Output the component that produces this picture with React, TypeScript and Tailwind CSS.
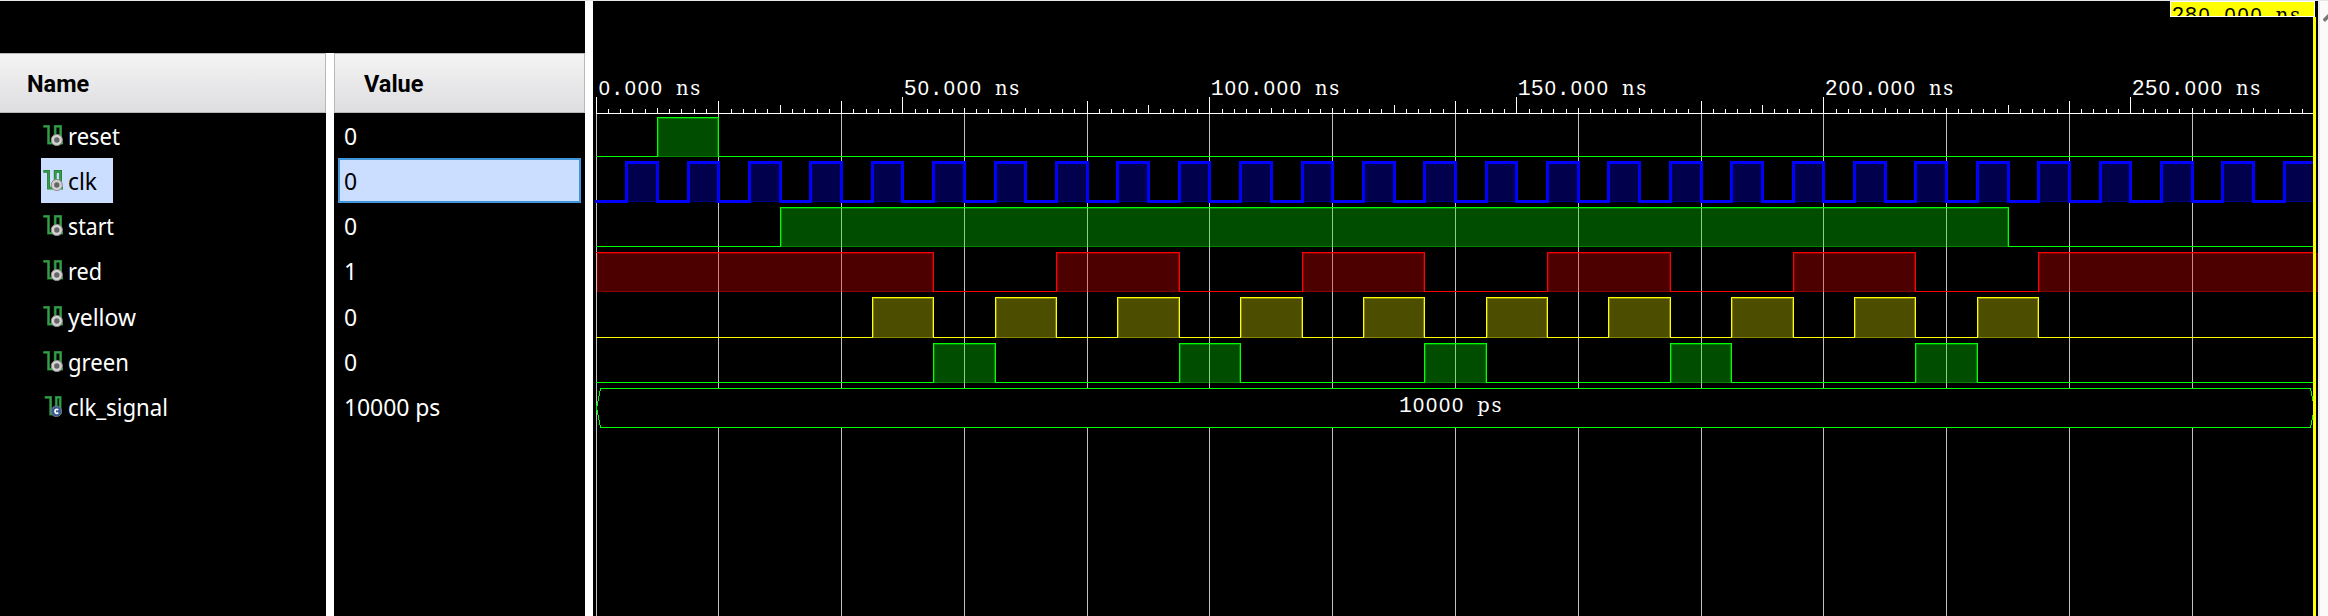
import React from "react";

const ORIGIN = 3;
const SCALE = 6.1393;
const END = 1722;
const px = (ns: number) => ORIGIN + Math.floor(ns * SCALE);

type Span = [number, number];

const signals = [
  { name: "reset", value: "0", h: "h-[45px]", w: "w-[52px]" },
  { name: "clk", value: "0", h: "h-[45px]", w: "w-[29px]", selected: true },
  { name: "start", value: "0", h: "h-[45px]", w: "w-[46px]" },
  { name: "red", value: "1", h: "h-[46px]", w: "w-[34px]" },
  { name: "yellow", value: "0", h: "h-[45px]", w: "w-[68px]" },
  { name: "green", value: "0", h: "h-[45px]", w: "w-[61px]" },
  { name: "clk_signal", value: "10000 ps", h: "h-[45px]", w: "w-[100px]", constant: true },
];

const clkSpans: Span[] = Array.from({ length: 28 }, (_, i) => [i * 10 + 5, i * 10 + 10]);
const yellowSpans: Span[] = Array.from({ length: 10 }, (_, i) => [i * 20 + 45, i * 20 + 55]);
const greenSpans: Span[] = Array.from({ length: 5 }, (_, i) => [i * 40 + 55, i * 40 + 65]);
const redSpans: Span[] = [[0, 55], [75, 95], [115, 135], [155, 175], [195, 215], [235, 281]];

function SignalIcon({ constant }: { constant?: boolean }) {
  const d = constant ? "M1.8 1.4H7.6V18.2H13.3V1.4H17.2V18.2" : "M0.4 1.4H5.5V18.2H12.2V1.4H17.6V18.2H20";
  return (
    <svg width="21" height="22" viewBox="0 0 21 22" className="shrink-0">
      <path d={d} fill="none" stroke="#237a35" strokeWidth="2.8" />
      <path d={d} fill="none" stroke="#32a047" strokeWidth="1.4" />
      {constant ? (
        <>
          <circle cx="13.3" cy="15.3" r="5.3" fill="#3a5a94" stroke="#6d7686" strokeWidth="1" />
          <path d="M15.3 13.9Q13.6 12.7 12.4 13.9Q11.5 15.3 12.4 16.7Q13.6 17.9 15.3 16.7" fill="none" stroke="#fff" strokeWidth="1.7" />
        </>
      ) : (
        <>
          <circle cx="13.8" cy="15" r="5.6" fill="#d2d2d2" stroke="#8c8c8c" strokeWidth="1" />
          <circle cx="13.8" cy="15" r="2.7" fill="#666" />
        </>
      )}
    </svg>
  );
}

function glyphStyle(ch: string) {
  if (ch === "0") return { family: "'Liberation Sans', sans-serif", size: 20 };
  if (/[a-z]/.test(ch)) return { family: "'DejaVu Serif', serif", size: 19.5 };
  return { family: "'Liberation Mono', monospace", size: 21.5 };
}

function Mono({ x, y, text, color = "#fff" }: { x: number; y: number; text: string; color?: string }) {
  return (
    <text y={y} fill={color} textAnchor="middle" xmlSpace="preserve">
      {text.split("").map((ch, i) => {
        const g = glyphStyle(ch);
        return (
          <tspan key={i} x={x + i * 13 + 6.5} fontFamily={g.family} fontSize={g.size}>
            {ch}
          </tspan>
        );
      })}
    </text>
  );
}

function Wave({ spans, high, low, color, width = 1 }: { spans: Span[]; high: number; low: number; color: string; width?: number }) {
  const startsHigh = spans[0][0] === 0;
  let d = `M${ORIGIN + 0.5 - (width > 1 ? 1.5 : 0.5)} ${(startsHigh ? high : low) + 0.5}`;
  for (const [a, b] of spans) {
    if (a > 0) d += `H${px(a) + 0.5}V${high + 0.5}`;
    if (b < 280) d += `H${px(b) + 0.5}V${low + 0.5}`;
  }
  d += `H${END}`;
  return (
    <g>
      {spans.map(([a, b]) => {
        const x0 = px(a);
        const x1 = px(b);
        return (
          <g key={a}>
            <rect x={x0 + 1} y={high + 1} width={x1 - x0 - 1} height={low - high} fill={color} fillOpacity="0.3" />
            <rect x={x0 + 1.5} y={high + 1.5} width={x1 - x0 - 2} height={low - high - 1} fill="none" stroke={color} strokeOpacity="0.32" />
          </g>
        );
      })}
      <path d={d} fill="none" stroke={color} strokeWidth={width} />
    </g>
  );
}

function tickTop(ns: number) {
  if (ns % 50 === 0) return 97;
  if (ns % 10 !== 0) return 109;
  if ([20, 40, 80, 140, 180, 240].includes(ns)) return 101;
  if ([30, 90, 130, 190, 230].includes(ns)) return 105;
  return 108;
}

function Waveform() {
  const ticks = Array.from({ length: 140 }, (_, i) => i * 2);
  const grid = Array.from({ length: 14 }, (_, i) => i * 20);
  return (
    <svg width="1725" height="615" viewBox="0 1 1725 615" className="block shrink-0 bg-black" shapeRendering="crispEdges">
      {grid.map((t) => (
        <rect key={t} x={px(t)} y="114" width="1" height="502" fill="#c0c0c0" />
      ))}
      {ticks.map((t) => (
        <rect key={t} x={px(t)} y={tickTop(t)} width="1" height={113 - tickTop(t)} fill="#fff" />
      ))}
      <rect x={ORIGIN} y="113" width={END - ORIGIN} height="1" fill="#fff" />
      {[0, 50, 100, 150, 200, 250].map((t) => (
        <Mono key={t} x={px(t) + 1.7} y={95} text={`${t}.000 ns`} />
      ))}
      <Wave spans={[[10, 20]]} high={117} low={156} color="#00ff00" />
      <Wave spans={clkSpans} high={162} low={201} color="#0000ff" width={3} />
      <Wave spans={[[30, 230]]} high={207} low={246} color="#00ff00" />
      <Wave spans={redSpans} high={252} low={291} color="#ff0000" />
      <Wave spans={yellowSpans} high={297} low={337} color="#ffff00" />
      <Wave spans={greenSpans} high={343} low={382} color="#00ff00" />
      <path d="M7.5 388.5H1717.5L1721.5 408L1717.5 427.5H7.5L3.5 408Z" fill="#000" stroke="#00ff00" />
      <Mono x={806} y={412} text="10000 ps" />
      <rect x="1720" y="17" width="3" height="599" fill="#ffff00" />
      <svg x="1577" y="1" width="145" height="16">
        <rect width="145" height="16" fill="#fff" />
        <rect x="1" y="1" width="143" height="14" fill="#ffff00" />
        <svg width="145" height="15">
          <Mono x={1.5} y={21} text="280.000 ns" color="#000" />
        </svg>
      </svg>
    </svg>
  );
}

const headerCell = "flex h-[60px] items-center border-[#b8b8b8] bg-linear-to-b from-[#f4f4f4] to-[#dedee1] pt-[3px] font-['Roboto',sans-serif] text-[23.5px] font-bold text-black";

export default function App() {
  return (
    <div className="flex h-[616px] w-[2328px] flex-col overflow-hidden bg-[#e6e6e6] pt-px font-['Noto_Sans','Open_Sans',sans-serif] text-[23px] text-white">
      <div className="flex h-[615px]">
        <div className="flex w-[585px] shrink-0 flex-col bg-black pt-[52px]">
          <div className="flex grow">
            <div className="w-[326px] shrink-0">
              <div className={`${headerCell} border-y border-r pl-[27px]`}>Name</div>
              {signals.map((s) => (
                <div key={s.name} className={`${s.h} flex pl-[41px]`}>
                  <div className={`flex h-[45px] items-start pl-[2px] pr-4 ${s.selected ? "bg-[#cbdeff] text-black" : ""}`}>
                    <div className="pt-3">
                      <SignalIcon constant={s.constant} />
                    </div>
                    <svg className={`${s.w} ml-1 h-[45px] overflow-visible`}>
                      <text x="0" y="32" fill="currentColor" textLength={s.w.replace(/\D/g, "")} lengthAdjust="spacingAndGlyphs">
                        {s.name}
                      </text>
                    </svg>
                  </div>
                </div>
              ))}
            </div>
            <div className="w-2 shrink-0 bg-white" />
            <div className="w-[251px] shrink-0">
              <div className={`${headerCell} border pl-[29px]`}>Value</div>
              {signals.map((s) => (
                <div key={s.name} className={`${s.h} px-1`}>
                  <div className={`flex h-[45px] items-center border-2 pl-[4px] pt-[2px] leading-none tracking-[-0.1px] ${s.selected ? "border-[#4196d9] bg-[#cbdeff] text-black" : "border-transparent"}`}>
                    {s.value}
                  </div>
                </div>
              ))}
            </div>
          </div>
        </div>
        <div className="w-2 shrink-0 bg-white" />
        <Waveform />
        <div className="w-[2px] shrink-0 bg-[#e8e8e8]" />
        <div className="w-2 shrink-0 bg-[#fafafa] pt-[13px]">
          <svg width="8" height="9" viewBox="0 0 8 9">
            <path d="M8 0V5L5 8L3 6V5Z" fill="#777" />
          </svg>
        </div>
      </div>
    </div>
  );
}
